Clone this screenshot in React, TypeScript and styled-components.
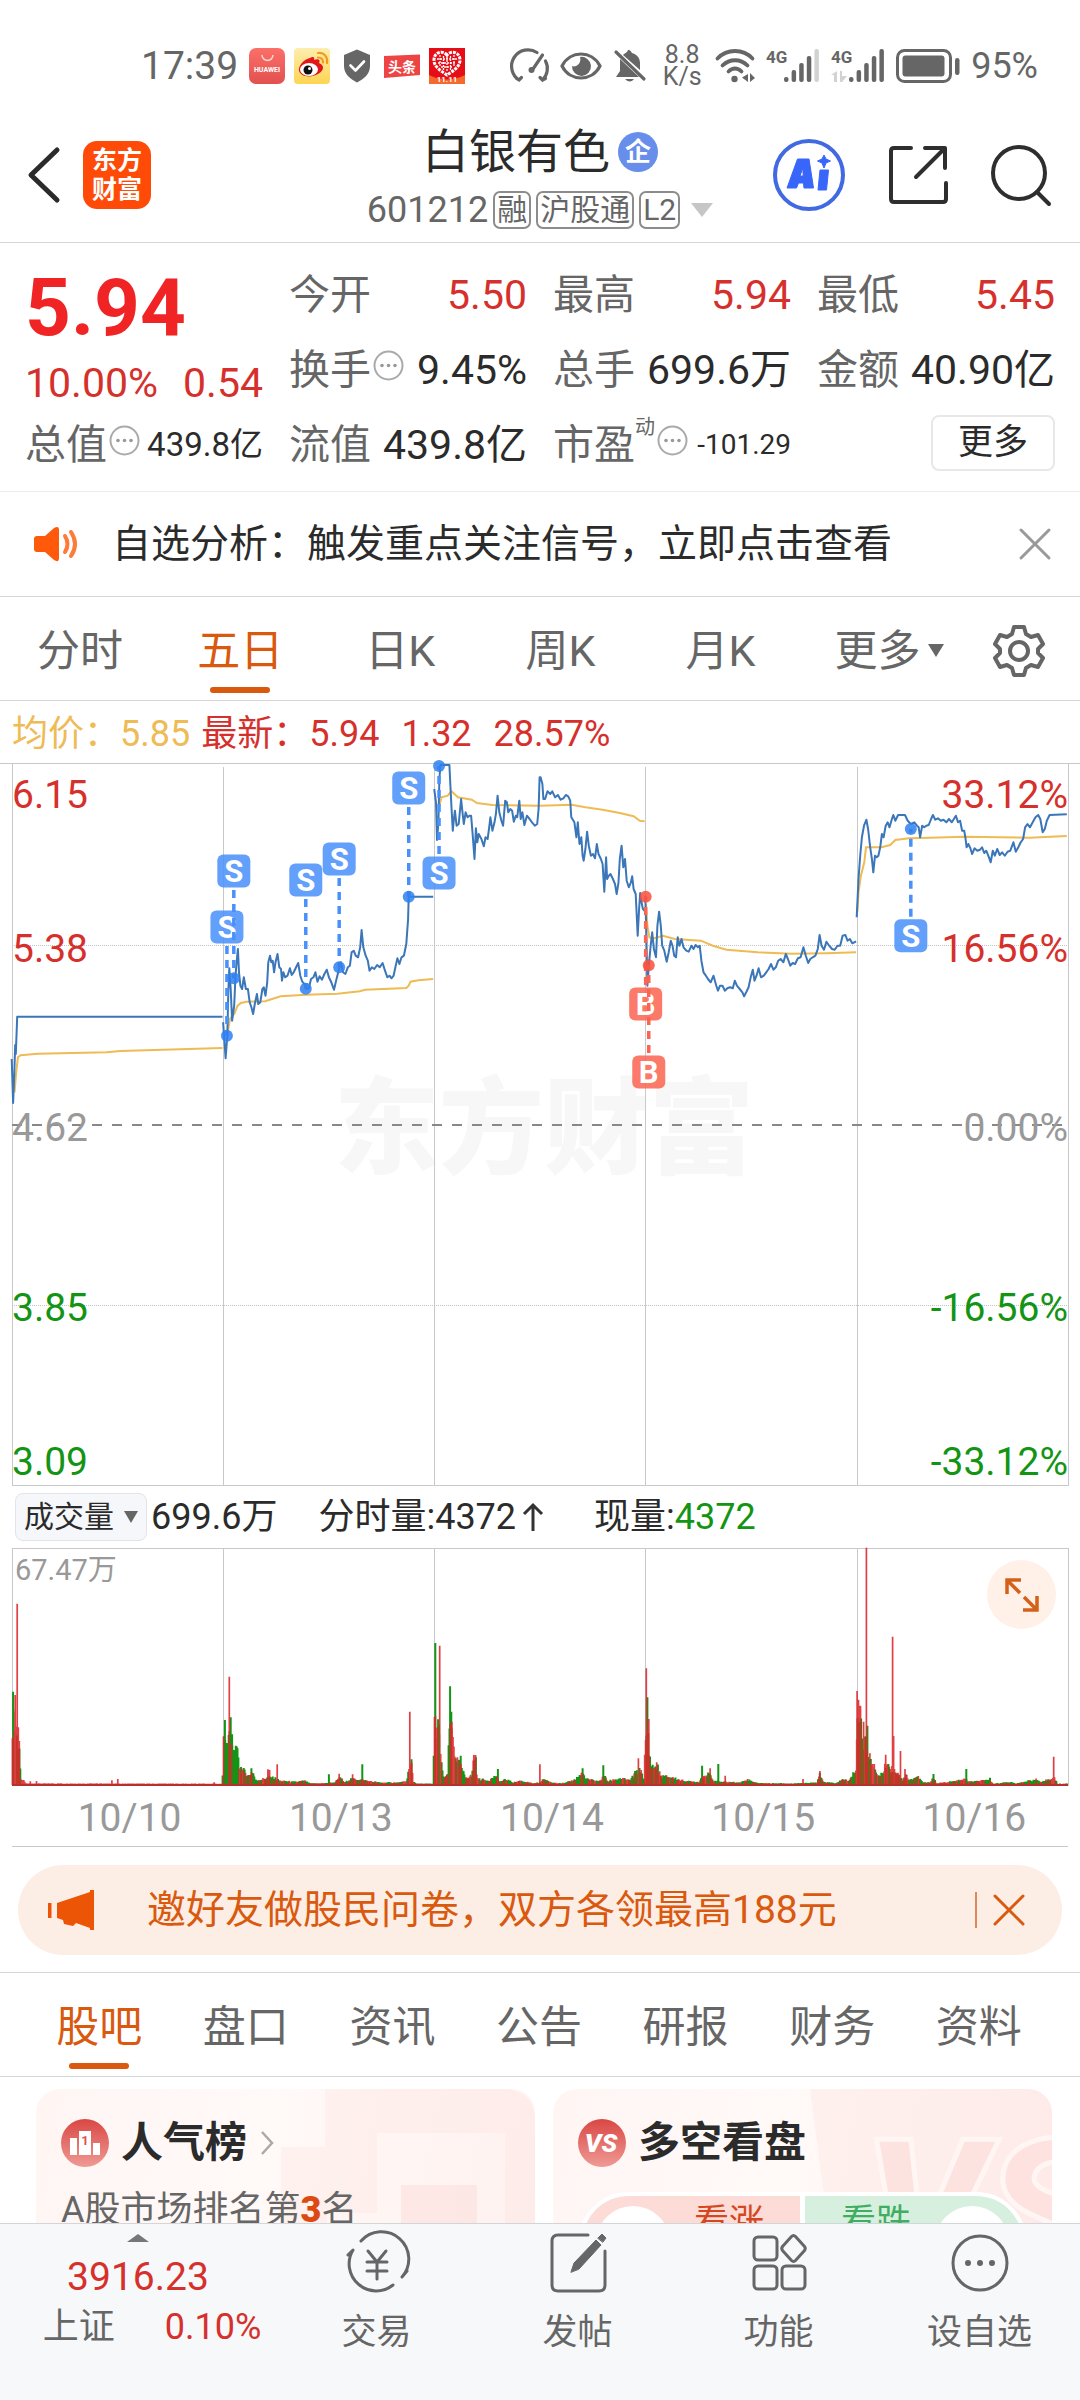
import React, { useState } from 'react';
import styled, { createGlobalStyle } from 'styled-components';

const c = {
  text: '#2b2b2b',
  sub: '#666666',
  mute: '#999999',
  line: '#d6d6d6',
  grid: '#c9c9c9',
  up: '#d6302c',
  down: '#149414',
  accent: '#d9590f',
  price: '#3a76b8',
  avg: '#eebb55',
  sell: '#4990fa',
  buy: '#fa6450',
};

const GlobalStyle = createGlobalStyle`
  *, *::before, *::after { box-sizing: border-box; }
  body {
    margin: 0;
    background: #fff;
    color: ${c.text};
    font-family: Roboto, "Noto Sans CJK SC", sans-serif;
    -webkit-font-smoothing: antialiased;
  }
  button, select { font: inherit; color: inherit; background: none; border: 0; margin: 0; padding: 0; }
  h1, h2, p, dl, dd, dt, ul { margin: 0; padding: 0; font-weight: 400; }
  svg { display: block; flex: none; overflow: visible; }
  a { color: inherit; text-decoration: none; }
`;

const Page = styled.div`
  display: flex;
  flex-direction: column;
  height: 100vh;
`;

const Scroller = styled.main`
  flex: 1;
  min-height: 0;
  overflow-y: auto;
  scrollbar-width: none;
`;

/* ---------- status bar ---------- */

const StatusBar = styled.div`
  display: flex;
  align-items: center;
  justify-content: space-between;
  height: 104px;
  padding: 28px 42px 0 141px;
  color: ${c.sub};
`;
const StatusGroup = styled.div<{ $gap: number }>`
  display: flex;
  align-items: center;
  gap: ${(p) => p.$gap}px;
`;
const Clock = styled.span`
  width: 99px;
  font-size: 39px;
  line-height: 44px;
`;
const Percent = styled.span`
  font-size: 36px;
  line-height: 44px;
`;
const NetSpeed = styled.span`
  display: grid;
  width: 44px;
  font-size: 25px;
  line-height: 22px;
  text-align: center;
`;

const HuaweiIcon = () => (
  <svg width="36" height="36" viewBox="0 0 36 36">
    <defs>
      <linearGradient id="hw" x1="0" y1="0" x2="0" y2="1">
        <stop offset="0" stopColor="#fb7068" />
        <stop offset="1" stopColor="#e2504f" />
      </linearGradient>
    </defs>
    <rect width="36" height="36" rx="7" fill="url(#hw)" />
    <path d="M13 7a5.500 5.500 0 0 0 11 0" fill="none" stroke="#ffd4cf" strokeWidth="1.500" />
    <text x="18" y="24" fill="#fff" fontSize="7" fontWeight="700" textAnchor="middle">HUAWEI</text>
  </svg>
);
const WeiboIcon = () => (
  <svg width="36" height="36" viewBox="0 0 36 36">
    <defs>
      <linearGradient id="wb" x1="0" y1="0" x2="0" y2="1">
        <stop offset="0" stopColor="#fdeeb0" />
        <stop offset="1" stopColor="#fdd551" />
      </linearGradient>
    </defs>
    <rect width="36" height="36" rx="4" fill="url(#wb)" />
    <path d="M16 10c3-2 5-1 4 2 4-2 7 0 5 3 6 2 5 8-1 11-7 4-17 3-19-3-1-5 5-12 11-13z" fill="#e3161a" />
    <ellipse cx="15" cy="21.500" rx="9" ry="6.500" fill="#fff" />
    <circle cx="14" cy="22" r="4.500" fill="#111" />
    <circle cx="15.500" cy="20.500" r="1.500" fill="#fff" />
    <path d="M24 5c6-1 10 4 9 10M24 9.500c3 0 5 2 5 5" fill="none" stroke="#f39a1d" strokeWidth="2.200" strokeLinecap="round" />
  </svg>
);
const ShieldIcon = () => (
  <svg width="36" height="36" viewBox="0 0 36 36">
    <path d="M18 1.500 31 7v11c0 8-6 13-13 16.500C11 31 5 26 5 18V7z" fill="#666" />
    <path d="m11.500 17.500 5 5 8.500-9" fill="none" stroke="#fff" strokeWidth="2.600" strokeLinecap="round" strokeLinejoin="round" />
  </svg>
);
const ToutiaoIcon = () => (
  <svg width="36" height="36" viewBox="0 0 36 36">
    <path d="M0 8 36 6.500v20.500L0 30z" fill="#ee4444" />
    <text x="18" y="24" fill="#fff" fontSize="14" fontWeight="700" textAnchor="middle">头条</text>
  </svg>
);
const FestivalIcon = () => (
  <svg width="36" height="36" viewBox="0 0 36 36">
    <rect width="36" height="36" fill="#e60d16" />
    <path d="M0 27q18 9 36 0v9H0z" fill="#f56a2c" />
    <path d="M18 7c-4-5-13-3-13 5 0 7 7 11 13 15 6-4 13-8 13-15 0-8-9-10-13-5z" fill="none" stroke="#fff" strokeWidth="3" strokeDasharray="3 1" />
    <path d="M11 7v12M14.500 8v15M18 9v15M21.500 8v15M25 7v12M8 11h20M9 15h18M12 19h12" stroke="#fff" strokeWidth="1.300" strokeDasharray="2 1" />
    <text x="18" y="34" fill="#fff" fontSize="8" fontWeight="700" textAnchor="middle">11.11</text>
  </svg>
);
const GaugeIcon = () => (
  <svg width="36" height="34" viewBox="0 0 36 34" fill="none" stroke="#666" strokeWidth="3.200" strokeLinecap="round">
    <path d="M3.500 29.500 6 31l2.500-2.500M6 31A16 16 0 0 1 24 3.500M32.500 12a16 16 0 0 1-3 19L27 28.500M29.500 31l3-1.500" />
    <path d="M29.500 6 20 20" />
    <circle cx="18.500" cy="21" r="3" fill="#666" stroke="none" />
  </svg>
);
const EyeIcon = () => (
  <svg width="42" height="30" viewBox="0 0 42 30">
    <path d="M2 15C10-1 32-1 40 15 32 31 10 31 2 15z" fill="none" stroke="#666" strokeWidth="3.200" />
    <path d="M20 6a9.500 9.500 0 1 1-8 9c4 2 10-3 8-9z" fill="#666" />
  </svg>
);
const BellOffIcon = () => (
  <svg width="36" height="36" viewBox="0 0 36 36">
    <path d="M7 11 26 29H3l4-6zM10 7c2-2 4-2 5-5 3 0 3 2 4 3 6 2 8 6 8 10v7z" fill="#666" />
    <path d="M12 31h9q-4 5-9 0z" fill="#666" />
    <path d="m3 4 28 27" stroke="#666" strokeWidth="3.200" strokeLinecap="round" />
  </svg>
);
const WifiIcon = () => (
  <svg width="40" height="34" viewBox="0 0 40 34" fill="none" stroke="#666" strokeWidth="3.800" strokeLinecap="round">
    <path d="M2.500 9.500C12-.5 28-.5 37.500 9.500M7.500 16.500c7-7 18-7 25 0M13.500 22.500c4-4 9-4 13 0" />
    <circle cx="19.500" cy="30" r="3.200" fill="#666" stroke="none" />
    <path d="M33 25v8l-6-4.500zM35 33v-9l5 5z" fill="#666" stroke="none" />
  </svg>
);
const SignalIcon = ({ weak, arrows }: { weak?: boolean; arrows?: boolean }) => (
  <svg width="54" height="34" viewBox="0 0 54 34">
    <text x="0" y="14" fontSize="17" fontWeight="700" fill="#666">4G</text>
    {arrows && <path d="M6 22v11H3v-7H0zM9 33V22h2v5h5l-5 6z" fill="#d2d2d2" />}
    {[0, 1, 2, 3, 4].map((i) => {
      const h = [5, 12, 19, 26, 33][i];
      return <rect key={i} x={18 + i * 7.600} y={33 - h} width="4.500" height={h} rx="2" fill={weak && i === 4 ? '#d2d2d2' : '#666'} />;
    })}
  </svg>
);
const BatteryIcon = () => (
  <svg width="64" height="34" viewBox="0 0 64 34">
    <rect x="1.500" y="1.500" width="53" height="31" rx="7" fill="none" stroke="#666" strokeWidth="3" />
    <rect x="6.500" y="6.500" width="42" height="21" rx="3" fill="#666" />
    <rect x="59" y="9" width="4.500" height="17" rx="2.200" fill="#666" />
  </svg>
);

/* ---------- title bar ---------- */

const TitleBar = styled.header`
  display: grid;
  grid-template-columns: 1fr auto 1fr;
  align-items: center;
  height: 139px;
  padding: 4px 28px 0;
  border-bottom: 1px solid ${c.line};
`;
const Tools = styled.div<{ $end?: boolean; $gap: number }>`
  display: flex;
  align-items: center;
  gap: ${(p) => p.$gap}px;
  justify-content: ${(p) => (p.$end ? 'flex-end' : 'flex-start')};
`;
const IconButton = styled.button`
  display: grid;
  place-items: center;
`;
const Logo = styled.a`
  display: grid;
  place-content: center;
  width: 68px;
  height: 68px;
  border-radius: 14px;
  background: #ff4a08;
  color: #fff;
  font-size: 25px;
  font-weight: 700;
  line-height: 29px;
  text-align: center;
`;
const TitleBlock = styled.div`
  display: grid;
  justify-items: center;
  gap: 9px;
`;
const StockName = styled.h1`
  display: flex;
  align-items: center;
  gap: 8px;
  font-size: 47px;
  line-height: 60px;
`;
const NameBadge = styled.span`
  display: grid;
  place-items: center;
  width: 40px;
  height: 40px;
  border-radius: 50%;
  background: #668eea;
  color: #fff;
  font-size: 26px;
  font-weight: 700;
  line-height: 36px;
`;
const CodeRow = styled.button`
  display: flex;
  align-items: center;
  gap: 5px;
  color: ${c.sub};
  font-size: 36px;
  line-height: 38px;
`;
const Tag = styled.span`
  height: 38px;
  padding: 0 2px;
  border: 2px solid #8c8c8c;
  border-radius: 7px;
  font-size: 30px;
  line-height: 34px;
`;
const DownArrow = styled.span<{ $w: number; $h: number; $color: string; $ml?: number }>`
  width: 0;
  height: 0;
  margin-left: ${(p) => p.$ml ?? 0}px;
  border: ${(p) => p.$w / 2}px solid transparent;
  border-top: ${(p) => p.$h}px solid ${(p) => p.$color};
  border-bottom: 0;
`;

/* ---------- quote ---------- */

const Quote = styled.section`
  display: grid;
  grid-template-columns: repeat(4, 1fr);
  grid-auto-rows: 75px;
  column-gap: 26px;
  padding: 14px 25px 9px;
  border-bottom: 1px solid #ececec;
`;
const PriceCell = styled.div`
  grid-row: span 2;
  display: grid;
  align-content: start;
  gap: 12px;
  padding-top: 13px;
`;
const Price = styled.strong`
  color: #f02424;
  font-size: 80px;
  line-height: 76px;
`;
const Change = styled.p`
  display: flex;
  justify-content: space-between;
  color: ${c.up};
  font-size: 41px;
  line-height: 50px;
`;
const Stat = styled.dl`
  display: flex;
  align-items: center;
  justify-content: space-between;
  white-space: nowrap;
`;
const StatName = styled.dt`
  display: flex;
  align-items: center;
  color: ${c.sub};
  font-size: 41px;
  line-height: 56px;
  svg { margin: 0 0 8px 2px; }
`;
const StatValue = styled.dd<{ $tone?: string; $small?: number }>`
  color: ${(p) => p.$tone ?? c.text};
  font-size: ${(p) => p.$small ?? 41}px;
  line-height: 56px;
`;
const Sup = styled.sup`
  align-self: flex-start;
  font-size: 20px;
  line-height: 20px;
`;
const MoreButton = styled.button`
  justify-self: end;
  width: 124px;
  height: 56px;
  margin-top: 8px;
  border: 2px solid #e8e8e8;
  border-radius: 8px;
  font-size: 35px;
  line-height: 50px;
`;
const InfoDot = () => (
  <svg width="31" height="31" viewBox="0 0 31 31">
    <circle cx="15.500" cy="15.500" r="14" fill="none" stroke="#aaa" strokeWidth="2" />
    {[9, 15.500, 22].map((x) => <circle key={x} cx={x} cy="15.500" r="1.800" fill="#999" />)}
  </svg>
);

/* ---------- notice ---------- */

const Notice = styled.section`
  display: flex;
  align-items: center;
  height: 105px;
  padding: 0 28px 0 34px;
  border-bottom: 1px solid ${c.line};
`;
const NoticeText = styled.p`
  flex: 1;
  padding-left: 32px;
  font-size: 39px;
  line-height: 56px;
`;

const Cross = ({ size, color }: { size: number; color: string }) => (
  <svg width={size} height={size} viewBox="0 0 34 34" stroke={color} strokeWidth="3" strokeLinecap="round">
    <path d="m3 3 28 28M31 3 3 31" />
  </svg>
);

/* ---------- tabs ---------- */

const Tabs = styled.nav<{ $left?: number; $right?: number }>`
  display: flex;
  height: 104px;
  padding: 0 ${(p) => p.$right ?? 0}px 0 ${(p) => p.$left ?? 0}px;
  border-bottom: 1px solid ${c.line};
`;
const Tab = styled.button<{ $on?: boolean; $grow?: number }>`
  position: relative;
  display: flex;
  flex: ${(p) => p.$grow ?? 1} 1 0;
  align-items: center;
  justify-content: center;
  padding-top: 4px;
  color: ${(p) => (p.$on ? c.accent : c.sub)};
  font-size: 43px;
  line-height: 60px;
  &::after {
    content: '';
    position: absolute;
    left: 50%;
    bottom: 7px;
    width: 60px;
    height: 6px;
    margin-left: -30px;
    border-radius: 3px;
    background: ${(p) => (p.$on ? c.accent : 'transparent')};
  }
`;

const Legend = styled.p`
  display: flex;
  align-items: center;
  height: 62px;
  padding-left: 12px;
  padding-top: 4px;
  color: ${c.up};
  font-size: 36px;
  line-height: 50px;
  white-space: pre;
`;
const LegendItem = styled.span<{ $avg?: boolean; $gap: number }>`
  margin-right: ${(p) => p.$gap}px;
  color: ${(p) => (p.$avg ? c.avg : c.up)};
`;

/* ---------- charts ---------- */

type Pt = [number, number];

// Samples are stored on a fine grid: 2.904 units per pixel across, 3 units per pixel down.
const UX = 2.904;
const UY = 3;
const px = (x: number) => x / UX;
const py = (y: number) => (y - 12) / UY;
const pairs = (s: string): Pt[] => s.trim().split(/\s+/).map((p) => p.split(',').map(Number) as Pt);
const line = (s: string) => pairs(s).map(([x, y]) => `${px(x).toFixed(1)},${py(y).toFixed(1)}`).join(' ');

const PRICE = [
  '34,900 38,1032 41,960 44,858 46,885 50,773 646,773',
  '648,790 655,898 660,830 663,700 666,628 670,690 674,785 680,740 684,650 687,610 691,570 694,640 698,680 703,690 708,655 714,690 720,690 725,730 730,745 735,765 740,735 746,705 750,735 756,730 762,690 766,685 771,710 776,670 779,610 784,590 788,610 792,605 796,640 800,610 806,585 811,625 816,630 819,665 823,640 828,655 835,650 842,628 847,648 853,640 860,625 866,612 872,650 878,668 884,675 890,690 897,688 903,660 910,655 916,640 922,668 928,652 935,662 942,645 949,632 955,655 962,670 970,692 976,665 982,640 990,610 996,640 1003,645 1010,625 1016,620 1021,580 1027,575 1033,590 1040,595 1046,565 1050,513 1055,565 1062,590 1068,605 1073,635 1080,625 1087,630 1095,618 1103,625 1111,612 1118,635 1125,655 1131,650 1137,658 1143,650 1149,620 1154,598 1160,615 1166,595 1173,590 1180,555 1185,480 1187,413 1258,413',
  '1261,90 1266,130 1269,243 1273,190 1276,60 1279,18 1305,18 1308,80 1311,140 1315,215 1318,180 1321,155 1326,200 1332,195 1339,120 1343,160 1347,195 1352,160 1358,175 1363,170 1368,170 1372,220 1378,300 1382,208 1386,250 1390,225 1398,240 1405,262 1410,235 1416,240 1420,210 1424,175 1430,215 1436,190 1440,165 1445,110 1450,160 1456,185 1461,200 1467,125 1472,130 1476,160 1482,150 1487,155 1492,188 1498,170 1502,175 1508,125 1512,180 1517,160 1523,198 1530,170 1538,180 1545,190 1553,200 1560,195 1564,150 1567,55 1570,55 1575,75 1578,120 1583,120 1590,97 1598,105 1604,97 1612,115 1620,108 1628,122 1636,118 1643,108 1650,112 1656,125 1659,175 1668,190 1674,235 1678,190 1683,255 1688,235 1692,290 1695,305 1700,270 1705,218 1710,260 1716,290 1722,285 1728,298 1733,255 1738,285 1745,300 1750,315 1755,398 1760,295 1763,360 1768,350 1773,345 1780,360 1786,375 1791,405 1796,370 1800,300 1805,260 1810,325 1815,300 1820,365 1826,385 1832,370 1836,352 1840,390 1846,405 1852,530 1856,450 1859,402 1863,430 1867,450 1872,455',
  '1874,410 1877,520 1880,680 1884,620 1889,565 1894,520 1899,570 1905,595 1909,500 1914,458 1919,500 1923,560 1929,575 1936,608 1942,580 1948,545 1953,560 1958,590 1963,595 1968,535 1973,560 1979,540 1985,565 1993,575 2000,578 2008,560 2014,570 2020,558 2027,565 2032,560 2037,605 2043,640 2050,650 2056,660 2064,670 2072,650 2080,680 2085,695 2091,680 2098,680 2105,695 2112,688 2120,685 2128,688 2134,665 2140,680 2148,690 2156,700 2161,712 2167,700 2174,685 2180,655 2186,632 2191,665 2197,650 2203,628 2210,655 2218,650 2225,640 2232,630 2239,615 2246,632 2253,625 2260,605 2267,600 2275,610 2282,585 2288,600 2295,620 2302,612 2309,615 2317,598 2325,595 2333,565 2340,590 2347,612 2353,600 2360,595 2368,590 2375,570 2380,528 2386,560 2393,572 2400,548 2408,560 2416,570 2424,572 2432,560 2440,560 2447,530 2455,528 2461,545 2468,540 2475,553 2486,547',
  '2488,475 2493,360 2498,290 2503,235 2509,200 2516,182 2521,210 2527,265 2532,300 2536,340 2541,290 2546,295 2551,290 2556,265 2561,225 2566,235 2572,200 2578,190 2583,205 2590,180 2594,168 2600,185 2608,168 2628,168 2636,185 2645,195 2655,190 2663,200 2668,205 2672,235 2678,200 2684,205 2690,200 2697,198 2704,180 2709,168 2716,182 2724,178 2732,185 2740,182 2748,190 2756,180 2764,190 2770,180 2776,170 2782,190 2788,185 2794,215 2800,215 2804,240 2807,265 2812,255 2818,268 2823,285 2830,268 2838,275 2846,272 2852,265 2858,282 2864,275 2870,290 2877,310 2883,275 2889,290 2896,270 2903,288 2910,280 2918,290 2926,278 2934,275 2943,250 2950,278 2957,265 2964,250 2971,240 2977,205 2984,195 2991,205 2999,190 3007,175 3015,168 3021,180 3028,220 3034,210 3040,185 3048,168 3098,166',
].map(line);

const AVERAGE = [
  '42,1000 47,940 52,895 60,889 110,884 310,880 350,876 646,867',
  '662,815 668,780 680,765 690,740 700,732 715,728 770,727 790,720 815,712 890,707 980,704 1045,697 1060,692 1180,687 1187,680 1192,668 1215,664 1258,660',
  '1276,140 1282,115 1300,110 1311,97 1330,115 1370,122 1385,132 1430,138 1568,140 1660,137 1700,145 1750,152 1800,162 1840,172 1858,185 1872,187',
  '1876,435 1880,500 1886,535 1900,538 1925,530 1960,540 2035,545 2070,560 2110,572 2200,580 2300,584 2400,583 2486,580',
  '2490,460 2493,400 2500,350 2510,310 2515,265 2560,265 2585,258 2600,243 2640,238 2700,236 2800,233 2990,236 3050,233 3098,231',
].map(line);

// [side, x, badge y, dot y]
const TRADES: ['S' | 'B', number, number, number][] = [
  ['S', 659, 504, 830],
  ['S', 679, 336, 658],
  ['S', 888, 363, 689],
  ['S', 985, 300, 625],
  ['S', 1187, 87, 413],
  ['S', 1275, 342, 20],
  ['B', 1875, 735, 413],
  ['B', 1884, 939, 619],
  ['S', 2645, 530, 210],
];

const DAY_EDGES = [223, 434, 645, 857];

const LEVELS = [
  { y: 45, price: '6.15', pct: '33.12%', color: c.up },
  { y: 199, price: '5.38', pct: '16.56%', color: c.up },
  { y: 378, price: '4.62', pct: '0.00%', color: c.mute },
  { y: 558, price: '3.85', pct: '-16.56%', color: c.down },
  { y: 712, price: '3.09', pct: '-33.12%', color: c.down },
];

const ChartSvg = styled.svg`
  width: 100%;
  height: auto;
`;

const PriceChart = () => (
  <ChartSvg viewBox="0 0 1080 723" role="img" aria-label="五日走势">
    <text x="544" y="402" fontSize="105" fontWeight="900" fill="#f7f7f7" textAnchor="middle">东方财富</text>
    <path d="M0 .5H1080M12 722.500H1069M12.500 0V722M1068.500 0V722" stroke={c.grid} />
    {DAY_EDGES.map((x) => <path key={x} d={`M${x + 0.5} 4V722`} stroke={c.grid} />)}
    <path d="M12 182.500H1068M12 542.500H1068" stroke="#c4c4c4" strokeDasharray="1 1" />
    <path d="M12 362H1068" stroke="#888" strokeWidth="2" strokeDasharray="10 10" />
    {AVERAGE.map((p) => <polyline key={p} points={p} fill="none" stroke={c.avg} strokeWidth="2" />)}
    {PRICE.map((p) => <polyline key={p} points={p} fill="none" stroke={c.price} strokeWidth="2" strokeLinejoin="round" />)}
    {TRADES.map(([side, ux, ub, ud]) => {
      const x = px(ux);
      const b = py(ub);
      const d = py(ud);
      const color = side === 'S' ? c.sell : c.buy;
      const edge = b < d ? b + 19 : b - 19;
      return (
        <g key={`${ux}-${ub}`}>
          <path d={`M${x} ${edge}V${d}`} stroke={color} strokeWidth="3.500" strokeDasharray="8 6" />
          <circle cx={x} cy={Math.max(d, 3)} r="6" fill={side === 'S' ? '#2f80f0' : '#f8503e'} fillOpacity=".85" />
          <rect x={x - 16.500} y={b - 16.500} width="33" height="33" rx="6" fill={color} fillOpacity=".86" />
          <text x={x} y={b + 11} fontSize="31" fontWeight="700" fill="#fff" textAnchor="middle">{side}</text>
        </g>
      );
    })}
    {LEVELS.map((l) => (
      <g key={l.price} fontSize="39" fill={l.color}>
        <text x="12" y={l.y}>{l.price}</text>
        <text x="1068" y={l.y} textAnchor="end">{l.pct}</text>
      </g>
    ))}
  </ChartSvg>
);

// Envelope of the minute volume bars: [x, height].
const ENVELOPE = pairs(`
36,200 44,240 50,150 57,130 60,15 68,15 75,5 640,4 646,4
648,150 660,150 668,150 676,110 692,105 694,65 705,50 722,30 734,45 742,15 765,20 780,25 800,22 812,14 860,10 885,14 900,5 945,6 970,8 990,25 1000,8 1020,20 1045,18 1060,15 1100,8 1160,8 1180,12 1187,50 1196,70 1200,12 1210,4 1258,4
1261,210 1275,180 1280,110 1286,25 1300,30 1307,230 1313,180 1320,110 1330,75 1343,50 1350,25 1370,30 1376,90 1382,85 1386,20 1420,15 1440,30 1450,10 1470,18 1490,8 1510,14 1550,5 1568,8 1580,20 1600,8 1640,6 1670,18 1692,40 1700,20 1740,12 1755,30 1765,12 1800,22 1830,15 1845,40 1862,50 1870,15
1873,110 1880,190 1886,100 1892,60 1910,60 1918,30 1950,25 1980,15 2000,12 2030,10 2040,30 2060,35 2070,15 2100,10 2150,8 2170,18 2200,6 2300,5 2373,8 2381,35 2390,10 2430,6 2450,20 2465,12 2480,40 2487,60
2489,250 2500,220 2505,140 2516,170 2522,90 2536,80 2545,30 2565,40 2575,80 2585,55 2595,50 2610,40 2620,15 2630,40 2640,15 2665,28 2680,8 2700,8 2710,25 2720,5 2790,15 2803,20 2815,10 2870,16 2885,4 2935,10 2950,4 2980,12 3010,18 3025,8 3050,22 3064,22 3070,4 3101,4`);

const RED_SPIKES = pairs(`44,650 50,376 53,747 56,788 325,906 342,902 106,908 88,909 622,912
666,595 778,873 783,875 805,858 985,886 1024,888 1190,700 1277,502 1312,730 1376,830 1381,830 1568,858 1854,840
1877,570 1884,722 1907,852 2062,870 2106,892 2381,878 2332,902 2489,638 2493,664 2499,684 2508,730 2516,208 2592,475 2595,773 2615,818 2572,829 2628,872 3060,835`);
const GREEN_SPIKES = pairs(`38,640 653,725 670,717 674,768 730,870 955,888 1052,858 1195,843 1264,494 1307,624 1338,832 1446,872 1692,870 1752,861
1880,657 2039,862 2086,857 2519,742 2806,872 2711,887 2875,898`);

const hash = (n: number) => {
  const v = Math.sin(n * 12.9898) * 43758.5453;
  return v - Math.floor(v);
};
const volumeAt = (x: number) => {
  const i = ENVELOPE.findIndex((p) => p[0] >= x);
  if (i <= 0) return ENVELOPE[0][1];
  const [x0, h0] = ENVELOPE[i - 1];
  const [x1, h1] = ENVELOPE[i];
  return h0 + ((h1 - h0) * (x - x0)) / (x1 - x0);
};
const BASE = 237;
const bar = (x: number, h: number) => `M${px(x).toFixed(1)} ${BASE}v${(-h / UY).toFixed(1)}`;
const bars = { red: '', green: '' };
for (let i = 0; i < 1200; i += 1) {
  const x = 36 + i * 2.554;
  const h = volumeAt(x) * (0.7 + hash(i) * 0.4);
  const quiet = x > 60 && x < 646;
  if (quiet || hash(i + 7000) > 0.62) bars.red += bar(x, h);
  else bars.green += bar(x, h);
}
RED_SPIKES.forEach(([x, y]) => { bars.red += bar(x, 920 - y); });
GREEN_SPIKES.forEach(([x, y]) => { bars.green += bar(x, 920 - y); });

const VolumeWrap = styled.div`
  position: relative;
`;
const VolumeChart = () => (
  <ChartSvg viewBox="0 0 1080 239" role="img" aria-label="成交量">
    <path d="M12 .5H1069M12.500 0V238M1068.500 0V238" stroke={c.grid} />
    {DAY_EDGES.map((x) => <path key={x} d={`M${x + 0.5} 0V238`} stroke={c.grid} />)}
    <path d={bars.green} stroke={c.down} strokeWidth="2" />
    <path d={bars.red} stroke="#dc262a" strokeWidth="1.700" strokeOpacity=".88" />
    <path d="M12 237H1068" stroke="#b8302c" strokeWidth="2" />
    <text x="15" y="32" fontSize="29" fill={c.mute}>67.47万</text>
  </ChartSvg>
);
const ExpandButton = styled.button`
  position: absolute;
  top: 12px;
  right: 24px;
  display: grid;
  place-items: center;
  width: 69px;
  height: 69px;
  border-radius: 50%;
  background: #fff0e8;
`;

const VolumeBar = styled.div`
  display: flex;
  align-items: center;
  height: 62px;
  padding-left: 15px;
  font-size: 36px;
  line-height: 50px;
`;
const IndicatorPicker = styled.label`
  position: relative;
  display: flex;
  align-items: center;
  margin-right: 4px;
`;
const Select = styled.select`
  appearance: none;
  width: 132px;
  height: 48px;
  padding: 0 28px 0 8px;
  border: 1px solid #e2e4ea;
  border-radius: 8px;
  background: #f6f7fa;
  font-size: 30px;
  line-height: 44px;
`;
const PickerArrow = styled.span`
  position: absolute;
  right: 9px;
  border: 7px solid transparent;
  border-top: 12px solid ${c.sub};
  border-bottom: 0;
  pointer-events: none;
`;
const VolumeFact = styled.span<{ $gap: number }>`
  display: flex;
  align-items: center;
  margin-right: ${(p) => p.$gap}px;
`;
const Down = styled.span`
  color: ${c.down};
`;

const Dates = styled.div`
  display: grid;
  grid-template-columns: repeat(5, 1fr);
  height: 59px;
  margin: 0 0 0 12px;
  padding-left: 12px;
  color: ${c.mute};
  font-size: 39px;
  line-height: 62px;
  text-align: center;
`;
const Rule = styled.hr`
  height: 1px;
  margin: 0 12px;
  border: 0;
  background: ${c.grid};
`;

/* ---------- banner ---------- */

const BannerWrap = styled.section`
  padding: 18px 18px 17px;
  border-bottom: 1px solid ${c.line};
`;
const Banner = styled.div`
  display: flex;
  align-items: center;
  height: 90px;
  padding: 0 36px 0 30px;
  border-radius: 45px;
  background: #fdeee5;
  color: ${c.accent};
`;
const BannerText = styled.a`
  flex: 1;
  padding-left: 53px;
  font-size: 39px;
  line-height: 56px;
`;
const BannerDivider = styled.span`
  width: 2px;
  height: 36px;
  margin-right: 15px;
  background: #de8a58;
`;

/* ---------- cards ---------- */

const Cards = styled.section`
  display: grid;
  grid-template-columns: 1fr 1fr;
  gap: 18px;
  padding: 12px 28px 0 36px;
`;
const Card = styled.article`
  position: relative;
  overflow: hidden;
  height: 240px;
  padding: 30px 25px 0;
  border-radius: 24px;
  background: linear-gradient(100deg, #fff6f4 0%, #fff9f7 45%, #fff1ef 100%);
`;
const CardArt = styled.div`
  position: absolute;
  top: 0;
  right: 0;
`;
const CardTitle = styled.h2`
  position: relative;
  display: flex;
  align-items: center;
  gap: 12px;
  height: 48px;
  font-size: 42px;
  font-weight: 700;
  line-height: 48px;
`;
const RankText = styled.p`
  position: relative;
  margin-top: 18px;
  color: ${c.sub};
  font-size: 36px;
  line-height: 50px;
  b { color: #dc4a12; font-weight: 900; }
`;
const Vote = styled.div`
  position: relative;
  display: grid;
  grid-template-columns: 1fr 1fr;
  gap: 5px;
  height: 102px;
  margin-top: 25px;
  border: 4px solid #fff;
  border-radius: 51px;
  background: #fff;
  overflow: hidden;
`;
const VoteSide = styled.button<{ $bull?: boolean }>`
  display: flex;
  flex-direction: ${(p) => (p.$bull ? 'row' : 'row-reverse')};
  align-items: flex-start;
  gap: 24px;
  padding: 6px 14px 0;
  background: ${(p) => (p.$bull ? '#fddbd7' : '#d7efde')};
  color: ${(p) => (p.$bull ? '#d4481f' : '#3fae62')};
  font-size: 35px;
  line-height: 42px;
`;
const VoteDisc = styled.span`
  width: 74px;
  height: 74px;
  margin-top: 4px;
  border-radius: 50%;
  background: #fff;
`;

/* ---------- bottom bar ---------- */

const BottomBar = styled.footer`
  display: flex;
  height: 177px;
  border-top: 1px solid #d4d5d9;
  background: #f7f8fa;
  color: ${c.sub};
`;
const IndexBlock = styled.button`
  display: flex;
  flex-direction: column;
  align-items: center;
  width: 276px;
  padding-top: 10px;
  font-size: 36px;
  line-height: 50px;
`;
const UpArrow = styled.span`
  border: 11px solid transparent;
  border-bottom: 8px solid #777;
  border-top: 0;
`;
const IndexValue = styled.span`
  margin-top: 10px;
  color: ${c.up};
  font-size: 39px;
  line-height: 50px;
`;
const IndexRow = styled.span`
  display: flex;
  gap: 50px;
  padding-left: 28px;
`;
const Up = styled.span`
  color: ${c.up};
`;
const Action = styled.button`
  display: flex;
  flex: 1;
  flex-direction: column;
  align-items: center;
  gap: 14px;
  padding-top: 8px;
  font-size: 35px;
  line-height: 50px;
`;

const ActionIcon = ({ kind }: { kind: string }) => (
  <svg width="64" height="62" viewBox="0 0 64 62" fill="none" stroke="#666" strokeWidth="3" strokeLinecap="round" strokeLinejoin="round">
    {kind === 'trade' && (
      <>
        <path d="M16 9A27 27 0 0 1 57 45l5-6M48 53A27 27 0 0 1 8 18l-5 5" />
        <path d="m23 19 9 11 9-11M22 30h20M22 39h20M32 30v17" />
      </>
    )}
    {kind === 'post' && (
      <>
        <path d="M42 3H12Q6 3 6 9v44q0 6 6 6h41q6 0 6-6V19" />
        <path d="m25 40 3-9L50 8l5 5-22 24z" fill="#666" strokeWidth="1" />
        <path d="m52 6 4-4 4 4-3 4z" fill="#666" strokeWidth="1" />
      </>
    )}
    {kind === 'apps' && (
      <>
        <rect x="7" y="5" width="23" height="23" rx="4" />
        <rect x="7" y="34" width="23" height="23" rx="4" />
        <rect x="35" y="34" width="23" height="23" rx="4" />
        <path d="M44.500 4.500q2-2 4 0l9 10q1.500 2 0 4l-9 10q-2 2-4 0l-9-10q-1.500-2 0-4z" />
      </>
    )}
    {kind === 'more' && (
      <>
        <circle cx="32" cy="31" r="27" />
        {[20, 32, 44].map((x) => <circle key={x} cx={x} cy="31" r="3" fill="#666" stroke="none" />)}
      </>
    )}
  </svg>
);

const STATS = [
  { name: '今开', value: '5.50', tone: c.up },
  { name: '最高', value: '5.94', tone: c.up },
  { name: '最低', value: '5.45', tone: c.up },
  { name: '换手', value: '9.45%', info: true },
  { name: '总手', value: '699.6万' },
  { name: '金额', value: '40.90亿' },
  { name: '总值', value: '439.8亿', info: true, small: 33 },
  { name: '流值', value: '439.8亿' },
  { name: '市盈', value: '-101.29', info: true, small: 28, sup: '动' },
];

export default function App() {
  const [period, setPeriod] = useState('五日');
  const [section, setSection] = useState('股吧');
  return (
    <>
      <GlobalStyle />
      <Page>
        <Scroller>
          <StatusBar>
            <StatusGroup $gap={9}>
              <Clock>17:39</Clock>
              <HuaweiIcon />
              <WeiboIcon />
              <ShieldIcon />
              <ToutiaoIcon />
              <FestivalIcon />
            </StatusGroup>
            <StatusGroup $gap={11}>
              <GaugeIcon />
              <EyeIcon />
              <BellOffIcon />
              <NetSpeed><span>8.8</span><span>K/s</span></NetSpeed>
              <WifiIcon />
              <SignalIcon weak />
              <SignalIcon arrows />
              <BatteryIcon />
              <Percent>95%</Percent>
            </StatusGroup>
          </StatusBar>

          <TitleBar>
            <Tools $gap={22}>
              <IconButton aria-label="返回">
                <svg width="33" height="56" viewBox="0 0 33 56" fill="none" stroke="#2b2b2b" strokeWidth="5" strokeLinecap="round" strokeLinejoin="round">
                  <path d="M29 3 3 28l26 25" />
                </svg>
              </IconButton>
              <Logo href="#home"><span>东方</span><span>财富</span></Logo>
            </Tools>
            <TitleBlock>
              <StockName>白银有色<NameBadge>企</NameBadge></StockName>
              <CodeRow>
                <span>601212</span>
                <Tag>融</Tag>
                <Tag>沪股通</Tag>
                <Tag>L2</Tag>
                <DownArrow $w={22} $h={14} $color="#c6c6c6" $ml={6} />
              </CodeRow>
            </TitleBlock>
            <Tools $end $gap={43}>
              <IconButton aria-label="Ai">
                <svg width="72" height="72" viewBox="0 0 72 72">
                  <circle cx="36" cy="36" r="34" fill="none" stroke="#4169e1" strokeWidth="4" />
                  <path d="M14 49 24.500 20H36l4.500 29H31l-.5-5h-5L23.500 49zM27 37h3.200l-.4-8zM47 31h8.500l-2 20H45zM51 16l2 4 4.500 2-4.500 2-2 5-2-5-4.500-2 4.500-2z" fill="#3866fb" fillRule="evenodd" stroke="#3866fb" strokeLinejoin="round" />
                </svg>
              </IconButton>
              <IconButton aria-label="分享">
                <svg width="60" height="60" viewBox="0 0 60 60" fill="none" stroke="#2e2e2e" strokeWidth="4" strokeLinecap="round" strokeLinejoin="round">
                  <path d="M23 3H6Q3 3 3 6v48q0 3 3 3h49q3 0 3-3V38M37 3h20v20M56 4 28 32" />
                </svg>
              </IconButton>
              <IconButton aria-label="搜索">
                <svg width="61" height="60" viewBox="0 0 61 60" fill="none" stroke="#2e2e2e" strokeWidth="4" strokeLinecap="round">
                  <circle cx="28" cy="28" r="26" />
                  <path d="m46 47 12 12" />
                </svg>
              </IconButton>
            </Tools>
          </TitleBar>

          <Quote>
            <PriceCell>
              <Price>5.94</Price>
              <Change><span>10.00%</span><span>0.54</span></Change>
            </PriceCell>
            {STATS.map((s) => (
              <Stat key={s.name}>
                <StatName>{s.name}{s.sup && <Sup>{s.sup}</Sup>}{s.info && <InfoDot />}</StatName>
                <StatValue $tone={s.tone} $small={s.small}>{s.value}</StatValue>
              </Stat>
            ))}
            <MoreButton>更多</MoreButton>
          </Quote>

          <Notice>
            <svg width="46" height="38" viewBox="0 0 46 38">
              <path d="M3 11h8L20 3q5-3 5 2v28q0 5-5 2l-9-8H3q-3 0-3-3V14q0-3 3-3z" fill="#ff5a0c" />
              <path d="M31 11q5 8 0 16M37 7q8 12 0 24" fill="none" stroke="#ff7a38" strokeWidth="4" strokeLinecap="round" />
            </svg>
            <NoticeText>自选分析：触发重点关注信号，立即点击查看</NoticeText>
            <IconButton aria-label="关闭提示"><Cross size={34} color="#999" /></IconButton>
          </Notice>

          <Tabs $right={20}>
            {['分时', '五日', '日K', '周K', '月K'].map((t) => (
              <Tab key={t} $on={t === period} onClick={() => setPeriod(t)}>{t}</Tab>
            ))}
            <Tab $grow={1.11}>更多<DownArrow $w={16} $h={13} $color={c.sub} $ml={8} /></Tab>
            <Tab $grow={0.51} aria-label="设置">
              <svg width="52" height="52" viewBox="0 0 52 52" fill="none" stroke="#666" strokeWidth="4" strokeLinejoin="round">
                <path d="M21 2h10l2 7 5 3 7-2 5 9-5 5v4l5 5-5 9-7-2-5 3-2 7H21l-2-7-5-3-7 2-5-9 5-5v-4l-5-5 5-9 7 2 5-3z" />
                <circle cx="26" cy="26" r="9" />
              </svg>
            </Tab>
          </Tabs>

          <Legend>
            <LegendItem $avg $gap={11}>均价：5.85</LegendItem>
            <LegendItem $gap={22}>最新：5.94</LegendItem>
            <LegendItem $gap={22}>1.32</LegendItem>
            <LegendItem $gap={0}>28.57%</LegendItem>
          </Legend>

          <PriceChart />

          <VolumeBar>
            <IndicatorPicker>
              <Select aria-label="指标"><option>成交量</option></Select>
              <PickerArrow />
            </IndicatorPicker>
            <VolumeFact $gap={41}>699.6万</VolumeFact>
            <VolumeFact $gap={48}>
              分时量:4372
              <svg width="30" height="30" viewBox="0 0 30 30" fill="none" stroke="#333" strokeWidth="3">
                <path d="M17 29V3M8 12l9-9 9 9" />
              </svg>
            </VolumeFact>
            <VolumeFact $gap={0}>现量:<Down>4372</Down></VolumeFact>
          </VolumeBar>

          <VolumeWrap>
            <VolumeChart />
            <ExpandButton aria-label="展开">
              <svg width="34" height="34" viewBox="0 0 34 34" fill="none" stroke="#d4601a" strokeWidth="3.500">
                <path d="M2 16V2h14M2 2l13 13M32 18v14H18M32 32 19 19" />
              </svg>
            </ExpandButton>
          </VolumeWrap>
          <Dates>
            {['10/10', '10/13', '10/14', '10/15', '10/16'].map((d) => <span key={d}>{d}</span>)}
          </Dates>
          <Rule />

          <BannerWrap>
            <Banner>
              <svg width="46" height="40" viewBox="0 0 46 40" fill="#ec5506">
                <path d="M0 13h3.500v15H0zM9 13 42 2V0h4v40h-4v-2L28 33l-3 3-9-2-1-4-6-2z" />
              </svg>
              <BannerText href="#survey">邀好友做股民问卷，双方各领最高188元</BannerText>
              <BannerDivider />
              <IconButton aria-label="关闭活动"><Cross size={34} color={c.accent} /></IconButton>
            </Banner>
          </BannerWrap>

          <Tabs $left={26} $right={28}>
            {['股吧', '盘口', '资讯', '公告', '研报', '财务', '资料'].map((t) => (
              <Tab key={t} $on={t === section} onClick={() => setSection(t)}>{t}</Tab>
            ))}
          </Tabs>

          <Cards>
            <Card>
              <CardArt>
                <svg width="260" height="240" viewBox="0 0 260 240" fill="#fbdcd8">
                  <path d="M50 0h175q35 0 35 35v205h-30V44H102v80H52v116H6V58h44z" opacity=".25" />
                  <path d="M126 96h76v144h-76zM74 182h36v58H74z" opacity=".5" />
                  <path d="M218 226h32v14h-32z" opacity=".5" />
                  <path d="m147 196 30-18v62h-17v-40l-13 7z" fill="#fff3f1" />
                </svg>
              </CardArt>
              <CardTitle>
                <svg width="48" height="48" viewBox="0 0 48 48">
                  <defs>
                    <linearGradient id="disc" x1="0" y1="0" x2="0" y2="1">
                      <stop offset="0" stopColor="#d94744" />
                      <stop offset="1" stopColor="#ef9a95" />
                    </linearGradient>
                  </defs>
                  <circle cx="24" cy="24" r="24" fill="url(#disc)" />
                  <path d="M18 12h12v24H18zM9 19h7v17H9zM32 24h7v12h-7z" fill="#fff" />
                  <text x="24" y="26" fontSize="13" fontWeight="700" fill="#db5350" textAnchor="middle">1</text>
                </svg>
                <span>人气榜</span>
                <svg width="16" height="26" viewBox="0 0 16 26" fill="none" stroke="#aaa" strokeWidth="2.500">
                  <path d="m3 2 10 11L3 24" />
                </svg>
              </CardTitle>
              <RankText>A股市场排名第<b>3</b>名</RankText>
            </Card>
            <Card>
              <CardArt>
                <svg width="250" height="240" viewBox="0 0 250 240">
                  <path d="M8 0h242v240H40z" fill="#fbdcd8" opacity=".28" />
                  <text x="62" y="186" fontSize="190" fontWeight="900" fontStyle="italic" fill="#fbdcd8" fillOpacity=".6" stroke="#fff6f4" strokeWidth="5">VS</text>
                </svg>
              </CardArt>
              <CardTitle>
                <svg width="48" height="48" viewBox="0 0 48 48">
                  <circle cx="24" cy="24" r="24" fill="url(#disc)" />
                  <text x="23" y="33" fontSize="26" fontWeight="900" fontStyle="italic" fill="#fff" textAnchor="middle">VS</text>
                </svg>
                <span>多空看盘</span>
              </CardTitle>
              <Vote>
                <VoteSide $bull><VoteDisc />看涨</VoteSide>
                <VoteSide><VoteDisc />看跌</VoteSide>
              </Vote>
            </Card>
          </Cards>
        </Scroller>

        <BottomBar>
          <IndexBlock>
            <UpArrow />
            <IndexValue>3916.23</IndexValue>
            <IndexRow><span>上证</span><Up>0.10%</Up></IndexRow>
          </IndexBlock>
          {[['trade', '交易'], ['post', '发帖'], ['apps', '功能'], ['more', '设自选']].map(([kind, name]) => (
            <Action key={kind}><ActionIcon kind={kind} />{name}</Action>
          ))}
        </BottomBar>
      </Page>
    </>
  );
}
